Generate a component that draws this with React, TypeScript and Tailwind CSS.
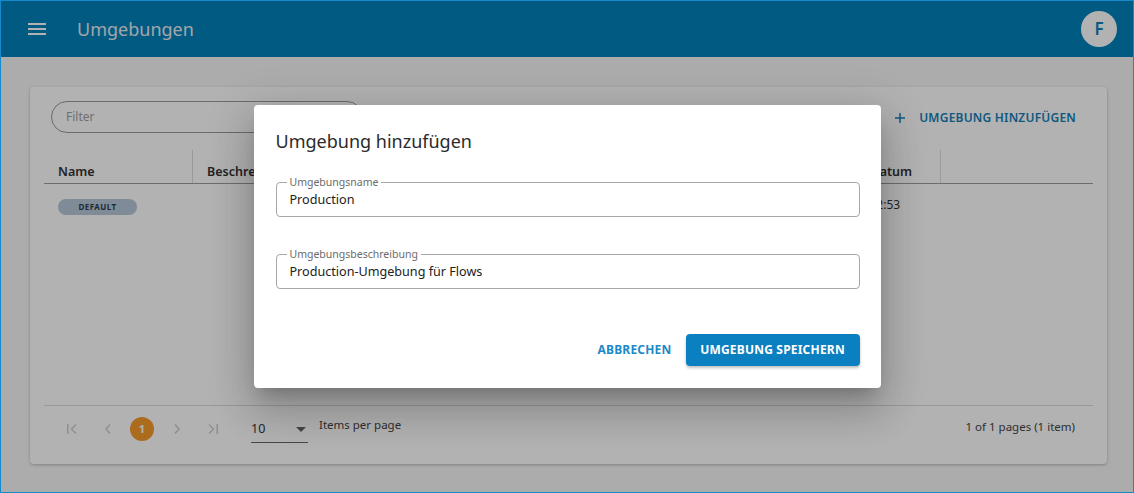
import React from "react";

const font = "font-['Noto_Sans',sans-serif]";

function Hamburger() {
  return (
    <svg width="18" height="12" viewBox="0 0 18 12" className="block">
      <rect x="0" y="0" width="18" height="2" fill="currentColor" />
      <rect x="0" y="5" width="18" height="2" fill="currentColor" />
      <rect x="0" y="10" width="18" height="2" fill="currentColor" />
    </svg>
  );
}

function OutlinedField({ label, value }: { label: string; value: string }) {
  return (
    <div className="relative h-[35px] rounded-[4px] border border-[#a8a8a8] px-[13px] flex items-center">
      <span className="absolute -top-[8px] left-[10px] bg-white px-[3px] text-[10.5px] leading-[14px] text-[#6b6b6b]">
        {label}
      </span>
      <span className="text-[12.6px] text-[#222] pt-[1px]">{value}</span>
    </div>
  );
}

export default function App() {
  return (
    <div className={`w-[1134px] h-[493px] border border-[#1589c9] ${font}`}>
      <div className="relative w-full h-full overflow-hidden bg-[#f6f6f6] flex flex-col">
        {/* Header */}
        <header className="h-[56px] shrink-0 bg-[#0082bb] flex items-center pl-[27px] pr-[16px] text-white">
          <Hamburger />
          <span className="ml-[31px] text-[18px] leading-[28px] text-[#e8eef2]">Umgebungen</span>
          <div className="ml-auto w-[36px] h-[36px] rounded-full bg-white flex items-center justify-center text-[#0f80b6] text-[17px] font-semibold">
            F
          </div>
        </header>

        {/* Content */}
        <main className="flex-1 pt-[30px] pl-[29px] pr-[26px] pb-[28px] flex">
          <div className="flex-1 rounded-[4px] bg-white shadow-[0_1px_3px_rgba(0,0,0,0.25)] px-[14px] pt-[14px] flex flex-col">
            {/* Toolbar */}
            <div className="h-[32px] flex items-center justify-between">
              <div className="ml-[7px] w-[312px] h-[32px] rounded-full border border-[#9a9a9a] flex items-center px-[14px] text-[12px] text-[#a0a0a0]">
                Filter
              </div>
              <div className="mr-[17px] flex items-center text-[#1680b8] text-[12px] font-semibold tracking-[0.2px] pt-[2px]">
                <svg width="10" height="10" viewBox="0 0 10 10" className="mr-[14px]">
                  <rect x="4.25" y="0" width="1.5" height="10" fill="currentColor" />
                  <rect x="0" y="4.25" width="10" height="1.5" fill="currentColor" />
                </svg>
                UMGEBUNG HINZUFÜGEN
              </div>
            </div>

            {/* Table header */}
            <div className="mt-[17px] h-[34px] flex border-b border-[#9c9c9c] text-[12.5px] leading-[20px] font-semibold text-[#333]">
              <div className="w-[149px] flex items-end pb-[1px] pl-[14px] border-r border-[#dddddd]">Name</div>
              <div className="w-[394px] flex items-end pb-[1px] pl-[14px] border-r border-[#dddddd]">Beschreibung</div>
              <div className="w-[204px] flex items-end pb-[1px] pl-[14px] border-r border-[#dddddd]">Erstellungsdatum</div>
              <div className="w-[150px] flex items-end pb-[1px] pl-[14px] border-r border-[#dddddd]">Änderungsdatum</div>
              <div className="flex-1" />
            </div>

            {/* Row */}
            <div className="h-[46px] flex items-start pt-[13px] text-[12px] text-[#333]">
              <div className="w-[149px] pl-[14px]">
                <span className="inline-flex items-center justify-center w-[79px] h-[16px] rounded-full bg-[#b6c8d8] text-[8px] font-bold tracking-[0.4px] text-[#2e3c48]">
                  DEFAULT
                </span>
              </div>
              <div className="w-[394px] pl-[14px]" />
              <div className="w-[204px] pl-[14px] leading-[16px]">14.03.2024 11:53</div>
              <div className="w-[150px] pl-[14px] leading-[16px]">14.03.2024 12:53</div>
            </div>

            <div className="flex-1" />

            {/* Footer */}
            <div className="h-[59px] border-t border-[#dcdcdc] flex items-start pt-[11px] text-[#444]">
              <div className="flex items-center h-[24px] pl-[22px] text-[#cdcdcd]">
                <svg width="12" height="12" viewBox="0 0 12 12">
                  <rect x="1" y="1" width="1.5" height="10" fill="currentColor" />
                  <path d="M10 1.5 L5.5 6 L10 10.5" stroke="currentColor" strokeWidth="1.5" fill="none" />
                </svg>
                <svg width="8" height="12" viewBox="0 0 8 12" className="ml-[26px]">
                  <path d="M6 1.5 L2 6 L6 10.5" stroke="currentColor" strokeWidth="1.5" fill="none" />
                </svg>
                <div className="ml-[18px] w-[24px] h-[24px] rounded-full bg-[#f59b2b] flex items-center justify-center text-white text-[11px] font-bold">
                  1
                </div>
                <svg width="8" height="12" viewBox="0 0 8 12" className="ml-[19px]">
                  <path d="M2 1.5 L6 6 L2 10.5" stroke="currentColor" strokeWidth="1.5" fill="none" />
                </svg>
                <svg width="12" height="12" viewBox="0 0 12 12" className="ml-[26px]">
                  <path d="M2 1.5 L6.5 6 L2 10.5" stroke="currentColor" strokeWidth="1.5" fill="none" />
                  <rect x="9.5" y="1" width="1.5" height="10" fill="currentColor" />
                </svg>
              </div>
              <div className="relative ml-[32px] -mt-[1px] w-[57px] h-[27px] border-b border-[#666] flex items-center text-[12.5px] text-[#333]">
                10
                <svg width="10" height="5" viewBox="0 0 10 5" className="absolute right-[2px] top-[11px]">
                  <path d="M0 0 L10 0 L5 5 Z" fill="#666" />
                </svg>
              </div>
              <div className="ml-[11px] leading-[16px] text-[11.5px] text-[#444]">Items per page</div>
              <div className="ml-auto mr-[18px] pt-[2px] leading-[16px] text-[11.5px] text-[#444]">1 of 1 pages (1 item)</div>
            </div>
          </div>
        </main>

        {/* Backdrop + dialog */}
        <div className="absolute inset-0 bg-black/30 flex items-center justify-center">
          <div className="w-[627px] h-[283px] rounded-[4px] bg-white shadow-[0_11px_15px_-7px_rgba(0,0,0,0.2),0_24px_38px_3px_rgba(0,0,0,0.14),0_9px_46px_8px_rgba(0,0,0,0.12)] pl-[22px] pr-[21px] pt-[21px] flex flex-col">
            <div className="text-[18px] leading-[30px] text-[#2b2b2b]">Umgebung hinzufügen</div>
            <div className="mt-[26px]">
              <OutlinedField label="Umgebungsname" value="Production" />
            </div>
            <div className="mt-[37px]">
              <OutlinedField label="Umgebungsbeschreibung" value="Production-Umgebung für Flows" />
            </div>
            <div className="mt-[45px] flex items-center justify-end gap-[14px]">
              <button className="h-[32px] text-[12px] font-bold text-[#1b8ac7] tracking-[0.2px]">
                ABBRECHEN
              </button>
              <button className="h-[32px] w-[174px] rounded-[4px] bg-[#0b80c0] text-white text-[12px] font-bold tracking-[0.2px] shadow-[0_2px_3px_rgba(0,0,0,0.25)]">
                UMGEBUNG SPEICHERN
              </button>
            </div>
          </div>
        </div>
      </div>
    </div>
  );
}
